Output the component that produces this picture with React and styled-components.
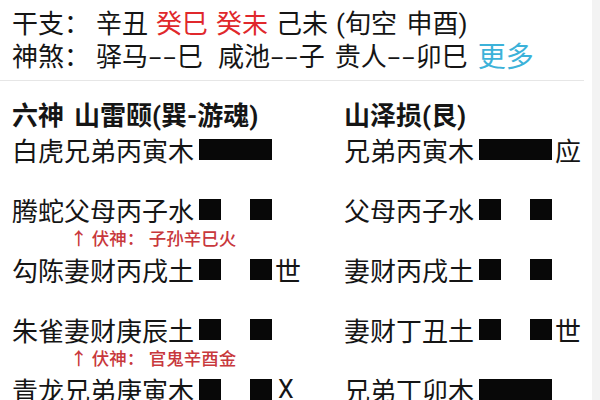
import React from 'react';
import styled, { createGlobalStyle } from 'styled-components';

const GlobalStyle = createGlobalStyle`
  html, body {
    margin: 0;
    padding: 0;
    background: #fff;
  }
  body {
    font-family: Roboto, "Noto Sans CJK SC", sans-serif;
    color: #151515;
  }
`;

const Page = styled.div`
  width: 600px;
  height: 400px;
  overflow: hidden;
  display: flex;
  background: #fff;
`;

const Main = styled.div`
  width: 592px;
  padding-top: 5px;
`;

const Strip = styled.div`
  flex: 1;
  background: #f3f3f3;
`;

const InfoRow = styled.div`
  display: flex;
  align-items: center;
  height: 33px;
  padding-left: 12px;
  font-size: 26px;
  white-space: nowrap;
`;

const Label = styled.span`
  width: 84px;
  flex: none;
`;

const Word = styled.span`
  color: ${(p) => (p.red ? '#e0282c' : p.link ? '#3cb2d9' : 'inherit')};
  font-size: ${(p) => (p.link ? '28px' : 'inherit')};
  margin-right: ${(p) => p.gap || 0}px;
  word-spacing: ${(p) => p.spread || 0}px;
`;

const Dash = styled.span`
  font-size: 22px;
`;

const Divider = styled.div`
  width: 584px;
  height: 1px;
  background: #e6e6e6;
  margin-top: 9px;
`;

const Header = styled.div`
  display: grid;
  grid-template-columns: 332px 1fr;
  height: 34px;
  align-items: center;
  margin-top: 14px;
  padding-left: 12px;
  font-size: 26px;
  font-weight: 700;
  white-space: nowrap;
`;

const HeadGap = styled.span`
  margin-left: 10px;
`;

const YaoRow = styled.div`
  display: grid;
  grid-template-columns: 332px 1fr;
  height: 40px;
  align-items: center;
  padding-left: 12px;
  font-size: 26px;
  white-space: nowrap;
`;

const Cell = styled.div`
  display: flex;
  align-items: center;
`;

const Bar = styled.div`
  width: 73px;
  height: 21px;
  margin: 0 3px 0 5px;
  display: flex;
  justify-content: space-between;
  flex: none;
`;

const Piece = styled.div`
  height: 100%;
  width: ${(p) => (p.full ? '100%' : '22px')};
  background: #080808;
`;

const Mark = styled.span`
  font-size: ${(p) => (p.latin ? '25px' : '26px')};
  margin-left: ${(p) => (p.latin ? '3px' : '0')};
`;

const FuShen = styled.div`
  height: 20px;
  line-height: 20px;
  padding-left: 70px;
  font-size: 17.5px;
  font-weight: 500;
  color: #c8383c;
  white-space: nowrap;
`;

const Yao = ({ text, yang, mark }) => (
  <Cell>
    <span>{text}</span>
    <Bar>
      {yang ? (
        <Piece full />
      ) : (
        <>
          <Piece />
          <Piece />
        </>
      )}
    </Bar>
    {mark && <Mark latin={mark === 'X'}>{mark}</Mark>}
  </Cell>
);

const Sha = ({ name, zhi, gap }) => (
  <Word gap={gap}>
    {name}
    <Dash>––</Dash>
    {zhi}
  </Word>
);

const rows = [
  {
    left: { text: '白虎兄弟丙寅木', yang: true },
    right: { text: '兄弟丙寅木', yang: true, mark: '应' },
  },
  {
    left: { text: '腾蛇父母丙子水', yang: false },
    right: { text: '父母丙子水', yang: false },
    fu: '子孙辛巳火',
  },
  {
    left: { text: '勾陈妻财丙戌土', yang: false, mark: '世' },
    right: { text: '妻财丙戌土', yang: false },
  },
  {
    left: { text: '朱雀妻财庚辰土', yang: false },
    right: { text: '妻财丁丑土', yang: false, mark: '世' },
    fu: '官鬼辛酉金',
  },
  {
    left: { text: '青龙兄弟庚寅木', yang: false, mark: 'X' },
    right: { text: '兄弟丁卯木', yang: true },
  },
];

export default function App() {
  return (
    <>
      <GlobalStyle />
      <Page>
        <Main>
          <InfoRow>
            <Label>干支：</Label>
            <Word gap={8}>辛丑</Word>
            <Word red gap={8}>癸巳</Word>
            <Word red gap={8}>癸未</Word>
            <Word gap={8}>己未</Word>
            <Word spread={3}>(旬空 申酉)</Word>
          </InfoRow>
          <InfoRow>
            <Label>神煞：</Label>
            <Sha name="驿马" zhi="巳" gap={15} />
            <Sha name="咸池" zhi="子" gap={10} />
            <Sha name="贵人" zhi="卯巳" gap={10} />
            <Word link>更多</Word>
          </InfoRow>
          <Divider />
          <Header>
            <span>
              六神<HeadGap>山雷颐(巽-游魂)</HeadGap>
            </span>
            <span>山泽损(艮)</span>
          </Header>
          {rows.map((r, i) => (
            <React.Fragment key={i}>
              <YaoRow>
                <Yao {...r.left} />
                <Yao {...r.right} />
              </YaoRow>
              <FuShen>{r.fu ? `↑ 伏神： ${r.fu}` : ''}</FuShen>
            </React.Fragment>
          ))}
        </Main>
        <Strip />
      </Page>
    </>
  );
}
